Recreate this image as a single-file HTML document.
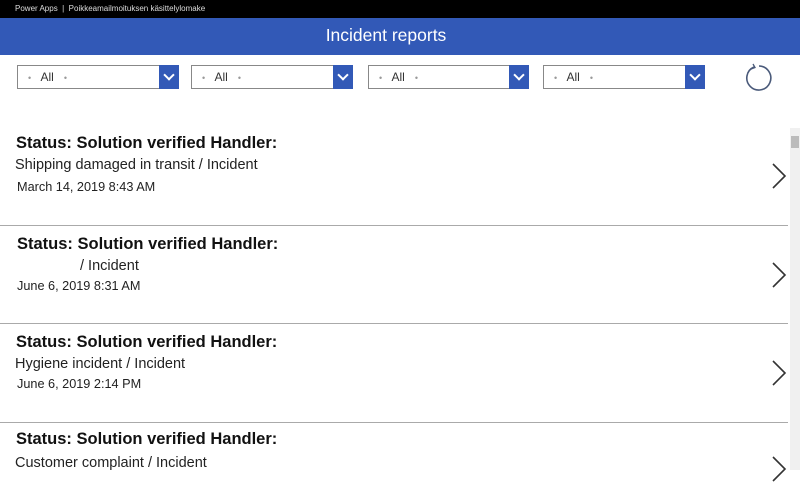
<!DOCTYPE html>
<html><head><style>
body{margin:0;width:800px;height:470px;overflow:hidden;background:#fff;font-family:"Liberation Sans",sans-serif;position:relative}
.top{position:absolute;left:0;top:0;width:800px;height:18px;background:#000;color:#ddd;font-size:8px;line-height:18px;padding-left:15px;box-sizing:border-box}
.hdr{position:absolute;left:0;top:18px;width:772px;height:37px;background:#3259b7;color:#fff;font-size:17.5px;text-align:center;line-height:35px;padding-right:28px}
.dd{position:absolute;top:65px;height:24px;border:1px solid #888;box-sizing:border-box;background:#fff;font-size:12px;color:#333;line-height:23px}
.dd span{margin-left:10px}
.dd b{font-weight:normal;color:#999;font-size:9px}
.dd i{position:absolute;right:-1px;top:-1px;width:20px;height:24px;background:#3259b7}
.dd i:after{content:"";position:absolute;left:6px;top:6px;width:6px;height:6px;border-right:2px solid #fff;border-bottom:2px solid #fff;transform:rotate(45deg)}
.row{position:absolute;left:0;width:788px;border-bottom:1px solid #aaa}
.t{position:absolute;left:16px;font-weight:bold;font-size:16.5px;color:#111}
.s{position:absolute;left:15px;font-size:14.5px;color:#222}
.d{position:absolute;left:17px;font-size:12.7px;color:#222}
.ch{position:absolute;left:768px}
</style></head><body>
<div class="top">Power Apps &nbsp;|&nbsp; Poikkeamailmoituksen käsittelylomake</div>
<div class="hdr">Incident reports</div>
<div class="dd" style="left:17px;width:162px"><span><b>•</b>&nbsp;&nbsp; All &nbsp;&nbsp;<b>•</b></span><i></i></div>
<div class="dd" style="left:191px;width:162px"><span><b>•</b>&nbsp;&nbsp; All &nbsp;&nbsp;<b>•</b></span><i></i></div>
<div class="dd" style="left:368px;width:161px"><span><b>•</b>&nbsp;&nbsp; All &nbsp;&nbsp;<b>•</b></span><i></i></div>
<div class="dd" style="left:543px;width:162px"><span><b>•</b>&nbsp;&nbsp; All &nbsp;&nbsp;<b>•</b></span><i></i></div>
<svg style="position:absolute;left:744px;top:63px" width="30" height="30"><path d="M10 4 A12 12 0 1 0 15 3" fill="none" stroke="#4a5a7a" stroke-width="1.6"/><path d="M9 1 L11 4.5 L7 6" fill="none" stroke="#4a5a7a" stroke-width="1.3"/></svg>
<div style="position:absolute;left:790px;top:128px;width:10px;height:342px;background:#f0f0f0"></div>
<div style="position:absolute;left:791px;top:136px;width:8px;height:12px;background:#bbb"></div>
<div class="row" style="top:126px;height:99px"><div class="t" style="top:8px">Status: Solution verified Handler:</div><div class="s" style="top:31px">Shipping damaged in transit / Incident</div><div class="d" style="top:54px">March 14, 2019 8:43 AM</div><svg class="ch" style="top:36px" width="22" height="28"><path d="M5 2 L17 14 L5 26" fill="none" stroke="#333" stroke-width="1.6"/></svg></div>
<div class="row" style="top:226px;height:97px"><div class="t" style="top:9px;left:17px">Status: Solution verified Handler:</div><div class="s" style="top:32px;left:80px">/ Incident</div><div class="d" style="top:53px">June 6, 2019 8:31 AM</div><svg class="ch" style="top:35px" width="22" height="28"><path d="M5 2 L17 14 L5 26" fill="none" stroke="#333" stroke-width="1.6"/></svg></div>
<div class="row" style="top:324px;height:98px"><div class="t" style="top:9px">Status: Solution verified Handler:</div><div class="s" style="top:32px">Hygiene incident / Incident</div><div class="d" style="top:53px">June 6, 2019 2:14 PM</div><svg class="ch" style="top:35px" width="22" height="28"><path d="M5 2 L17 14 L5 26" fill="none" stroke="#333" stroke-width="1.6"/></svg></div>
<div class="row" style="top:423px;height:60px;border:0"><div class="t" style="top:7px">Status: Solution verified Handler:</div><div class="s" style="top:32px">Customer complaint / Incident</div><svg class="ch" style="top:32px" width="22" height="28"><path d="M5 2 L17 14 L5 26" fill="none" stroke="#333" stroke-width="1.6"/></svg></div>
</body></html>
